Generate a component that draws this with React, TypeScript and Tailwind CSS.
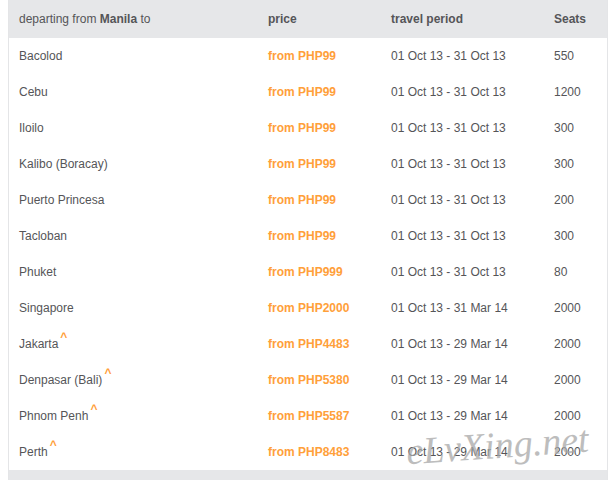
import React from "react";

type Row = { dest: string; caret?: boolean; price: string; period: string; seats: string };

const rows: Row[] = [
  { dest: "Bacolod", price: "from PHP99", period: "01 Oct 13 - 31 Oct 13", seats: "550" },
  { dest: "Cebu", price: "from PHP99", period: "01 Oct 13 - 31 Oct 13", seats: "1200" },
  { dest: "Iloilo", price: "from PHP99", period: "01 Oct 13 - 31 Oct 13", seats: "300" },
  { dest: "Kalibo (Boracay)", price: "from PHP99", period: "01 Oct 13 - 31 Oct 13", seats: "300" },
  { dest: "Puerto Princesa", price: "from PHP99", period: "01 Oct 13 - 31 Oct 13", seats: "200" },
  { dest: "Tacloban", price: "from PHP99", period: "01 Oct 13 - 31 Oct 13", seats: "300" },
  { dest: "Phuket", price: "from PHP999", period: "01 Oct 13 - 31 Oct 13", seats: "80" },
  { dest: "Singapore", price: "from PHP2000", period: "01 Oct 13 - 31 Mar 14", seats: "2000" },
  { dest: "Jakarta", caret: true, price: "from PHP4483", period: "01 Oct 13 - 29 Mar 14", seats: "2000" },
  { dest: "Denpasar (Bali)", caret: true, price: "from PHP5380", period: "01 Oct 13 - 29 Mar 14", seats: "2000" },
  { dest: "Phnom Penh", caret: true, price: "from PHP5587", period: "01 Oct 13 - 29 Mar 14", seats: "2000" },
  { dest: "Perth", caret: true, price: "from PHP8483", period: "01 Oct 13 - 29 Mar 14", seats: "2000" },
];

export default function App() {
  return (
    <div
      className="w-[609px] h-[480px] bg-white overflow-hidden relative"
      style={{ fontFamily: '"Liberation Sans", Arial, sans-serif' }}
    >
      <div className="ml-[8px] w-[600px] border-l border-r border-[#e4e5e7] text-[12px] text-[#555558]">
        <div className="h-[38px] bg-[#e6e7e9] flex items-center">
          <div className="w-[259px] pl-[10px]">
            departing from <span className="font-bold">Manila</span> to
          </div>
          <div className="w-[123px] font-bold">price</div>
          <div className="w-[163px] font-bold">travel period</div>
          <div className="font-bold">Seats</div>
        </div>
        {rows.map((r) => (
          <div key={r.dest} className="h-[36px] flex items-center">
            <div className="w-[259px] pl-[10px]">
              {r.dest}
              {r.caret && (
                <span className="relative top-[-7px] ml-[2px] text-[12px] font-bold text-[#ffa03a]">^</span>
              )}
            </div>
            <div className="w-[123px] font-bold text-[#ffa03a]">{r.price}</div>
            <div className="w-[163px]">{r.period}</div>
            <div>{r.seats}</div>
          </div>
        ))}
        <div className="h-[10px] bg-[#e6e7e9]" />
      </div>
      <div
        className="absolute left-[406px] top-[426px] text-[38px] leading-none italic text-[#a8a8a8] opacity-75 rotate-[-4deg] pointer-events-none"
        style={{ fontFamily: '"Liberation Serif", serif' }}
      >
        eLvXing.net
      </div>
    </div>
  );
}
